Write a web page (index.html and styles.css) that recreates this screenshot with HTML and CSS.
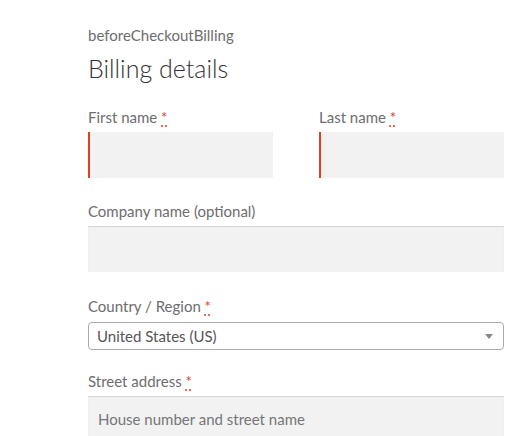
FILE: index.html
```html
<!DOCTYPE html>
<html>
<head>
<meta charset="utf-8">
<link rel="stylesheet" href="styles.css">
</head>
<body>
<div class="page">
  <p class="hook">beforeCheckoutBilling</p>
  <h3 class="title">Billing details</h3>
  <div class="pair">
    <div class="row">
      <label class="lbl">First name <abbr class="required" title="required">*</abbr></label>
      <div class="input invalid"></div>
    </div>
    <div class="row">
      <label class="lbl">Last name <abbr class="required" title="required">*</abbr></label>
      <div class="input invalid"></div>
    </div>
  </div>
  <div class="row">
    <label class="lbl">Company name <span class="opt">(optional)</span></label>
    <div class="input"></div>
  </div>
  <div class="row row-select">
    <label class="lbl">Country / Region <abbr class="required" title="required">*</abbr></label>
    <div class="select"><span>United States (US)</span><span class="arrow"></span></div>
  </div>
  <div class="row">
    <label class="lbl">Street address <abbr class="required" title="required">*</abbr></label>
    <div class="input"><span class="ph">House number and street name</span></div>
  </div>
</div>
</body>
</html>
```
FILE: styles.css
```css
html, body { margin: 0; padding: 0; background: #fff; }
body { font-family: "Lato", "Liberation Sans", sans-serif; color: #6d6d6d; font-size: 15px; overflow: hidden; }
.page { width: 416px; padding: 23px 0 0 88px; }
.hook { margin: 0; line-height: 24px; font-size: 15px; color: #6d6d6d; }
.title { margin: 4px 0 0; font-size: 25px; line-height: 34px; font-weight: 300; color: #333; }
.pair { display: grid; grid-template-columns: 185px 185px; column-gap: 46px; margin-top: 19px; }
.row { margin-bottom: 21px; }
.pair .row { margin-bottom: 20px; }
.row-select { margin-bottom: 18px; }
.lbl { display: block; line-height: 26px; margin-bottom: 2px; color: #6d6d6d; }
.row-select .lbl { margin-bottom: 3px; }
abbr.required { color: #e2401c; text-decoration: underline dotted; text-underline-offset: 3px; cursor: help; }
.input { height: 46px; background: #f2f2f2; box-shadow: inset 0 1px 1px rgba(0,0,0,.125); box-sizing: border-box; padding-left: 10px; display: flex; align-items: center; }
.input.invalid { box-shadow: inset 2px 0 0 #e2401c; }
.ph { color: #767676; }
.select { height: 28px; border: 1px solid #aaa; border-radius: 4px; box-sizing: border-box; display: flex; align-items: center; justify-content: space-between; padding: 0 10px 0 8px; color: #555; }
.arrow { width: 0; height: 0; border-left: 4px solid transparent; border-right: 4px solid transparent; border-top: 5px solid #888; }
```
